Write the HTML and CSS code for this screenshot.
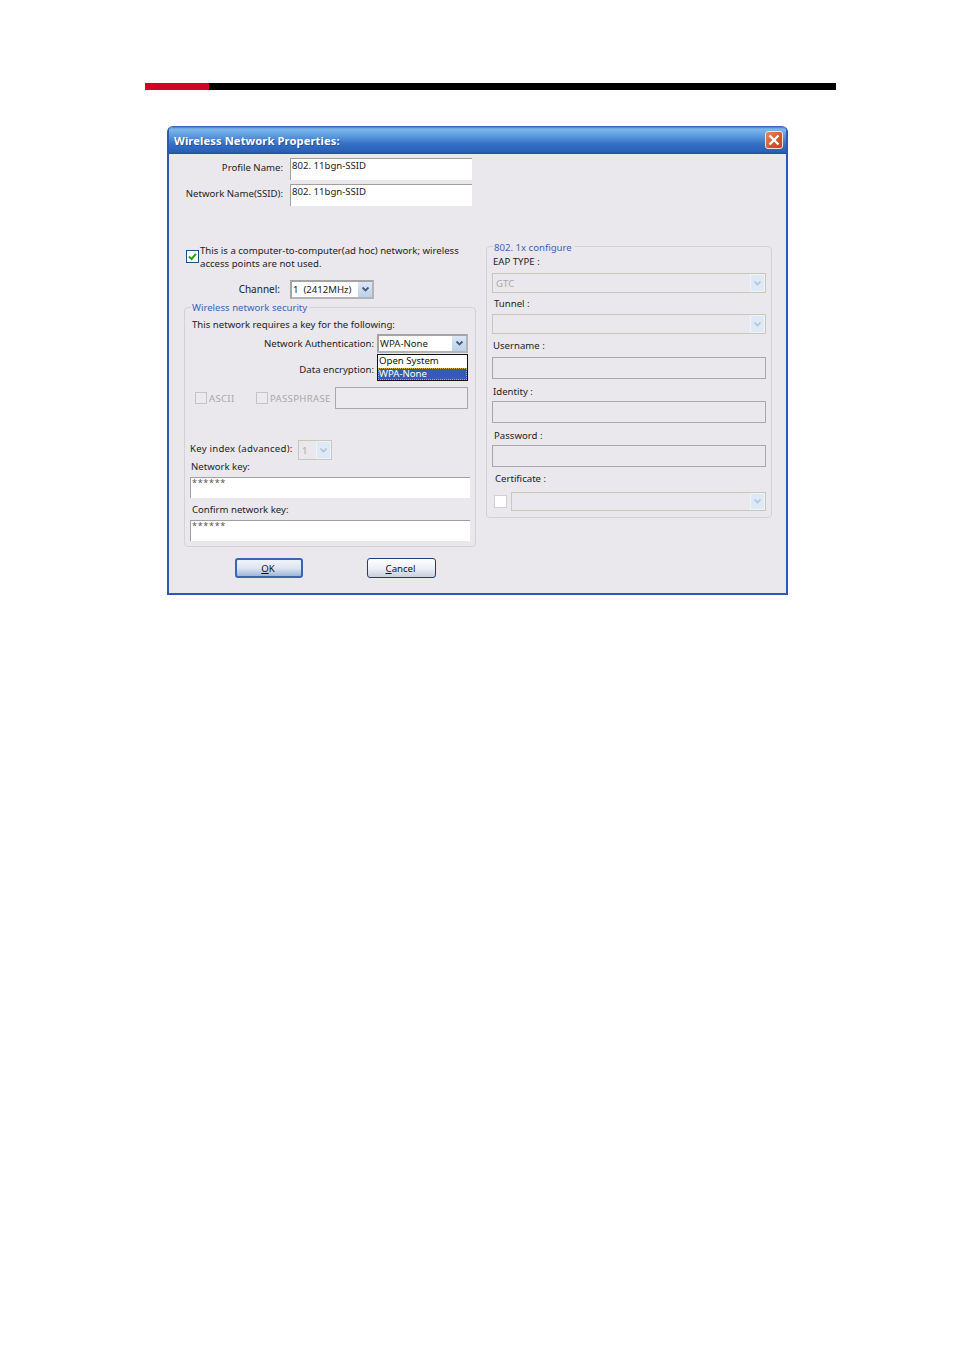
FILE: index.html
```html
<!DOCTYPE html>
<html lang="en">
<head>
  <meta charset="UTF-8">
  <title>Wireless Network Properties</title>
  <link rel="stylesheet" href="styles.css">
</head>
<body>
  <div class="page-rule"><span class="rule-red"></span></div>

  <div class="dialog">
    <div class="titlebar">
      <span class="title">Wireless Network Properties:</span>
      <span class="close">
        <svg width="12" height="12" viewBox="0 0 12 12"><path d="M1.5 1.5 L10.5 10.5 M10.5 1.5 L1.5 10.5" stroke="#fff" stroke-width="2.4" fill="none"/></svg>
      </span>
    </div>

    <div class="dialog-body">
      <!-- left column -->
      <div class="col-left">
        <div class="row name-row">
          <span class="name-label">Profile Name:</span>
          <span class="input name-input">802. 11bgn-SSID</span>
        </div>
        <div class="row name-row">
          <span class="name-label">Network Name(SSID):</span>
          <span class="input name-input">802. 11bgn-SSID</span>
        </div>

        <div class="adhoc">
          <span class="check check-on">
            <svg width="9" height="9" viewBox="0 0 9 9"><path d="M1 4.5 L3.5 7 L8 1.8" stroke="#21a121" stroke-width="2" fill="none"/></svg>
          </span>
          <span>This is a computer-to-computer(ad hoc) network; wireless<br>access points are not used.</span>
        </div>

        <div class="row channel-row">
          <span class="channel-label">Channel:</span>
          <div class="select channel-select">
            <span class="select-text">1&nbsp; (2412MHz)</span>
            <span class="arrow"><svg width="9" height="7" viewBox="0 0 9 7"><path d="M1.5 1.5 L4.5 4.5 L7.5 1.5" stroke="#4a5a78" stroke-width="1.8" fill="none"/></svg></span>
          </div>
        </div>

        <div class="group security">
          <span class="legend">Wireless network security</span>
          <div class="sec-intro">This network requires a key for the following:</div>

          <div class="row auth-row">
            <span class="sec-label">Network Authentication:</span>
            <div class="select sec-select">
              <span class="select-text">WPA-None</span>
              <span class="arrow"><svg width="9" height="7" viewBox="0 0 9 7"><path d="M1.5 1.5 L4.5 4.5 L7.5 1.5" stroke="#4a5a78" stroke-width="1.8" fill="none"/></svg></span>
            </div>
            <div class="dropdown">
              <div class="option">Open System</div>
              <div class="option option-active">WPA-None</div>
            </div>
          </div>

          <div class="row enc-row">
            <span class="sec-label">Data encryption:</span>
            <div class="select sec-select enc-select"></div>
          </div>

          <div class="row key-opts">
            <span class="check check-off"></span>
            <span class="muted ascii">ASCII</span>
            <span class="check check-off"></span>
            <span class="muted pass">PASSPHRASE</span>
            <span class="input-off pass-input"></span>
          </div>

          <div class="row index-row">
            <span class="index-label">Key index (advanced):</span>
            <div class="select select-off index-select">
              <span class="select-text muted">1</span>
              <span class="arrow arrow-off"><svg width="9" height="7" viewBox="0 0 9 7"><path d="M1.5 1.5 L4.5 4.5 L7.5 1.5" stroke="#b4c2d2" stroke-width="1.6" fill="none"/></svg></span>
            </div>
          </div>

          <div class="key-label">Network key:</div>
          <div class="input key-input">******</div>
          <div class="key-label confirm-label">Confirm network key:</div>
          <div class="input key-input">******</div>
        </div>

        <div class="buttons">
          <button type="button" class="btn btn-default"><u>O</u>K</button>
          <button type="button" class="btn"><u>C</u>ancel</button>
        </div>
      </div>

      <!-- right column -->
      <div class="group eap">
        <span class="legend">802. 1x configure</span>
        <div class="eap-label lab-eap">EAP TYPE :</div>
        <div class="select select-off eap-select gap-4">
          <span class="select-text muted">GTC</span>
          <span class="arrow arrow-off"><svg width="9" height="7" viewBox="0 0 9 7"><path d="M1.5 1.5 L4.5 4.5 L7.5 1.5" stroke="#b4c2d2" stroke-width="1.6" fill="none"/></svg></span>
        </div>
        <div class="eap-label lab-tunnel">Tunnel :</div>
        <div class="select select-off eap-select gap-4">
          <span class="select-text"></span>
          <span class="arrow arrow-off"><svg width="9" height="7" viewBox="0 0 9 7"><path d="M1.5 1.5 L4.5 4.5 L7.5 1.5" stroke="#b4c2d2" stroke-width="1.6" fill="none"/></svg></span>
        </div>
        <div class="eap-label lab-user">Username :</div>
        <div class="input-off eap-input gap-5"></div>
        <div class="eap-label lab-id">Identity :</div>
        <div class="input-off eap-input gap-3"></div>
        <div class="eap-label lab-pass">Password :</div>
        <div class="input-off eap-input gap-3"></div>
        <div class="eap-label lab-cert">Certificate :</div>
        <div class="row cert-row">
          <span class="check check-white"></span>
          <div class="select select-off cert-select">
            <span class="select-text"></span>
            <span class="arrow arrow-off"><svg width="9" height="7" viewBox="0 0 9 7"><path d="M1.5 1.5 L4.5 4.5 L7.5 1.5" stroke="#b4c2d2" stroke-width="1.6" fill="none"/></svg></span>
          </div>
        </div>
      </div>
    </div>
  </div>
</body>
</html>
```

FILE: styles.css
```css
/* Page */
* {
  box-sizing: border-box;
}
body {
  margin: 0;
  padding: 83px 0 0 145px;
  background-color: #ffffff;
  font-family: "Noto Sans", "Liberation Sans", sans-serif;
  font-size: 9.6px;
  line-height: 13px;
  color: #222;
}
.page-rule {
  width: 691px;
  height: 7px;
  background-color: #000;
}
.rule-red {
  display: block;
  width: 64px;
  height: 7px;
  background-color: #d20025;
}

/* Dialog window */
.dialog {
  width: 621px;
  height: 469px;
  margin: 36px 0 0 22px;
  background-color: #eae8ed;
  border-radius: 6px 6px 0 0;
  border: 2px solid #2c57b2;
  border-top: 0;
  overflow: hidden;
}
.titlebar {
  display: flex;
  align-items: center;
  justify-content: space-between;
  height: 28px;
  margin: 0 -2px;
  padding: 0 5px 0 7px;
  background: linear-gradient(#2c5aae 0, #7db7ec 3px, #5f9fe0 9px, #3470c4 18px, #2a5fb6 26px, #24489e 28px);
}
.title {
  padding-top: 1px;
  font-size: 11.2px;
  font-weight: 700;
  letter-spacing: 0.1px;
  color: #fff;
  text-shadow: 1px 1px 0 #2a4f98;
}
.close {
  display: flex;
  align-items: center;
  justify-content: center;
  width: 18px;
  height: 18px;
  border: 1px solid #f0e2dc;
  border-radius: 3px;
  background: linear-gradient(135deg, #e98a68, #d5532a 60%, #c24420);
}
.dialog-body {
  display: flex;
  align-items: flex-start;
  margin-left: 1px;
}
.col-left {
  width: 306px;
}
.row {
  display: flex;
  align-items: center;
}

/* Inputs */
.input {
  display: block;
  background-color: #fff;
  border-top: 1px solid #a0a0a0;
  border-left: 1px solid #a0a0a0;
  padding-left: 1px;
  line-height: 13px;
}
.input-off {
  display: block;
  border: 1px solid #a8a8a8;
  background-color: #eae8ed;
}
.select {
  display: flex;
  align-items: center;
  justify-content: space-between;
  background-color: #fff;
  border: 2px solid #b4b4b8;
  border-top-color: #a4a4a4;
  border-left-color: #a4a4a4;
}
.select-text {
  padding-left: 1px;
  white-space: nowrap;
}
.arrow {
  display: flex;
  align-items: center;
  justify-content: center;
  width: 15px;
  height: 100%;
  background: linear-gradient(#dbe7f6, #bcd1ea);
  border-left: 1px solid #fff;
}
.select-off {
  background-color: #eae8ed;
  border: 1px solid #c9c8b8;
}
.select-off .select-text {
  padding-left: 3px;
}
.arrow-off {
  background: #dde9f7;
  border: 1px solid #eef3fa;
}
.muted {
  color: #a9a9a9;
}

/* Checkboxes */
.check {
  display: flex;
  align-items: center;
  justify-content: center;
  flex: none;
  width: 13px;
  height: 13px;
}
.check-on {
  background-color: #fff;
  border: 1px solid #1c5180;
}
.check-off {
  width: 12px;
  height: 12px;
  border: 1px solid #c4c4c6;
  background-color: #eceaee;
}
.check-white {
  background-color: #fff;
  border: 1px solid #d0d0d0;
}

/* Name rows */
.name-row {
  align-items: flex-start;
  height: 22px;
  margin-top: 4px;
}
.name-label {
  width: 113px;
  padding-top: 3px;
  text-align: right;
  white-space: nowrap;
}
.name-input {
  width: 182px;
  height: 22px;
  margin-left: 7px;
}
.adhoc {
  display: flex;
  margin: 38px 0 0 16px;
  white-space: nowrap;
}
.adhoc .check {
  margin: 6px 1px 0 0;
}
.channel-row {
  margin-top: 10px;
}
.channel-label {
  width: 110px;
  text-align: right;
  font-size: 10px;
}
.channel-select {
  width: 84px;
  height: 19px;
  margin-left: 10px;
}

/* Group boxes */
.group {
  position: relative;
  border: 1px solid #d2d1d4;
  border-radius: 4px;
}
.legend {
  position: absolute;
  top: -7px;
  left: 6px;
  padding: 0 2px 0 1px;
  background-color: #eae8ed;
  color: #3b63b4;
  white-space: nowrap;
}
.eap .legend {
  top: -6px;
}
.security {
  width: 292px;
  margin: 8px 0 0 14px;
  padding: 10px 0 5px;
}
.sec-intro {
  padding-left: 7px;
}
.sec-label {
  width: 189px;
  text-align: right;
  white-space: nowrap;
}
.auth-row {
  position: relative;
  margin-top: 3px;
}
.sec-select {
  width: 91px;
  height: 19px;
  margin-left: 3px;
}
.dropdown {
  position: absolute;
  top: 20px;
  left: 192px;
  width: 91px;
  height: 27px;
  background-color: #fff;
  border: 1px solid #111;
  line-height: 12px;
}
.option {
  height: 12px;
  padding-left: 1px;
  color: #111;
}
.option-active {
  margin-top: 1px;
  background-color: #335ea8;
  color: #fff;
  outline: 1px dotted #d8b040;
  outline-offset: -1px;
}
.enc-row {
  margin-top: 7px;
}
.enc-row .sec-label {
  padding-bottom: 2px;
}
.enc-select {
  height: 21px;
}
.key-opts {
  height: 22px;
  margin-top: 6px;
  padding-left: 10px;
}
.ascii {
  width: 47px;
  margin-left: 2px;
  letter-spacing: 0.3px;
}
.pass {
  width: 65px;
  margin-left: 2px;
  letter-spacing: 0.3px;
}
.pass-input {
  width: 133px;
  height: 22px;
  background-color: #eceaee;
}
.index-row {
  margin-top: 31px;
  padding-left: 5px;
}
.index-label {
  width: 108px;
  padding-bottom: 3px;
  letter-spacing: 0.25px;
  white-space: nowrap;
}
.index-select {
  width: 34px;
  height: 20px;
}
.key-label {
  padding-left: 6px;
}
.confirm-label {
  margin-top: 5px;
  padding-left: 7px;
}
.key-input {
  width: 280px;
  height: 21px;
  margin: 4px 0 0 5px;
  color: #555;
  font-size: 9px;
  letter-spacing: 0.7px;
  line-height: 10px;
}

/* Buttons */
.buttons {
  display: flex;
  gap: 64px;
  margin: 11px 0 0 65px;
}
.btn {
  width: 69px;
  height: 20px;
  padding: 0 2px 0 0;
  border: 1px solid #1f3f74;
  border-radius: 3px;
  background: linear-gradient(#fff, #eef0f4 50%, #c6cfe0);
  font-family: inherit;
  font-size: 9.6px;
  color: #111;
}
.btn-default {
  width: 68px;
  border: 2px solid #3a66b0;
  background: linear-gradient(#eef3fb, #dfe6f2 50%, #9fb6d8);
}

/* 802.1x */
.eap {
  width: 286px;
  margin: 92px 0 0 10px;
  padding: 8px 0 6px 5px;
}
.eap-label {
  padding-left: 1px;
  white-space: nowrap;
}
.lab-tunnel { margin-top: 4px; padding-left: 2px; }
.lab-user { margin-top: 5px; }
.lab-id { margin-top: 6px; }
.lab-pass { margin-top: 6px; padding-left: 2px; }
.lab-cert { margin-top: 5px; padding-left: 3px; }
.gap-3 { margin-top: 3px; }
.gap-4 { margin-top: 5px; }
.gap-5 { margin-top: 5px; }
.lab-tunnel + .gap-4 { margin-top: 4px; }
.eap-select {
  width: 274px;
  height: 20px;
}
.eap-input {
  width: 274px;
  height: 22px;
}
.cert-row {
  margin-top: 7px;
  padding-left: 2px;
}
.cert-select {
  width: 255px;
  height: 19px;
  margin-left: 4px;
}
```
